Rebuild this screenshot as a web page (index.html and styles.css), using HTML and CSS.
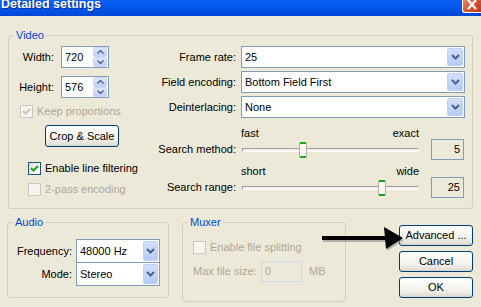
FILE: index.html
```html
<!DOCTYPE html>
<html lang="en">
<head>
<meta charset="utf-8">
<title>Detailed settings</title>
<link rel="stylesheet" href="styles.css">
</head>
<body>
<div class="titlebar">
  <span class="title">Detailed settings</span>
  <span class="close"><svg width="12" height="10" viewBox="0 0 12 10"><path d="M2 0 L10 9 M10 0 L2 9" stroke="#fff" stroke-width="2.2" fill="none"/></svg></span>
</div>
<main class="dialog">
  <fieldset class="group video">
    <legend>Video</legend>
    <div class="video-cols">
      <div class="vleft">
        <div class="spin-row">
          <span class="lbl">Width:</span>
          <div class="spin"><span class="spin-val">720</span><span class="spin-btns"><span class="spin-btn"><svg width="7" height="4" viewBox="0 0 7 4"><path d="M0.5 3.5 L3.5 0.5 L6.5 3.5" stroke="#4D6185" stroke-width="1.4" fill="none"/></svg></span><span class="spin-btn"><svg width="7" height="4" viewBox="0 0 7 4"><path d="M0.5 0.5 L3.5 3.5 L6.5 0.5" stroke="#4D6185" stroke-width="1.4" fill="none"/></svg></span></span></div>
        </div>
        <div class="spin-row second">
          <span class="lbl">Height:</span>
          <div class="spin"><span class="spin-val">576</span><span class="spin-btns"><span class="spin-btn"><svg width="7" height="4" viewBox="0 0 7 4"><path d="M0.5 3.5 L3.5 0.5 L6.5 3.5" stroke="#4D6185" stroke-width="1.4" fill="none"/></svg></span><span class="spin-btn"><svg width="7" height="4" viewBox="0 0 7 4"><path d="M0.5 0.5 L3.5 3.5 L6.5 0.5" stroke="#4D6185" stroke-width="1.4" fill="none"/></svg></span></span></div>
        </div>
        <label class="check disabled keep"><span class="box"><svg width="11" height="11" viewBox="0 0 11 11"><path d="M2 5 L4.5 7.5 L9 3" stroke="#CAC8BB" stroke-width="2" fill="none"/></svg></span>Keep proportions</label>
        <button class="btn crop" type="button">Crop &amp; Scale</button>
        <label class="check line"><span class="box"><svg width="11" height="11" viewBox="0 0 11 11"><path d="M2 5 L4.5 7.5 L9 3" stroke="#21A121" stroke-width="2" fill="none"/></svg></span>Enable line filtering</label>
        <label class="check disabled pass"><span class="box"></span>2-pass encoding</label>
      </div>
      <div class="vright">
        <span class="lbl">Frame rate:</span>
        <div class="combo"><span class="combo-val">25</span><span class="combo-btn"><svg width="9" height="6" viewBox="0 0 9 6"><path d="M1 1 L4.5 4.5 L8 1" stroke="#4D6185" stroke-width="2" fill="none"/></svg></span></div>
        <span class="lbl">Field encoding:</span>
        <div class="combo"><span class="combo-val">Bottom Field First</span><span class="combo-btn"><svg width="9" height="6" viewBox="0 0 9 6"><path d="M1 1 L4.5 4.5 L8 1" stroke="#4D6185" stroke-width="2" fill="none"/></svg></span></div>
        <span class="lbl">Deinterlacing:</span>
        <div class="combo"><span class="combo-val">None</span><span class="combo-btn"><svg width="9" height="6" viewBox="0 0 9 6"><path d="M1 1 L4.5 4.5 L8 1" stroke="#4D6185" stroke-width="2" fill="none"/></svg></span></div>

        <span class="lbl slider-lbl first">Search method:</span>
        <div class="slider-block first">
          <div class="slider-ends"><span>fast</span><span>exact</span></div>
          <div class="track-wrap"><span class="track"></span><span class="thumb" style="left:58px"></span></div>
          <div class="value-box">5</div>
        </div>
        <span class="lbl slider-lbl">Search range:</span>
        <div class="slider-block">
          <div class="slider-ends"><span>short</span><span>wide</span></div>
          <div class="track-wrap"><span class="track"></span><span class="thumb" style="left:137px"></span></div>
          <div class="value-box">25</div>
        </div>
      </div>
    </div>
  </fieldset>

  <div class="bottom">
    <fieldset class="group audio">
      <legend>Audio</legend>
      <div class="audio-grid">
        <span class="lbl">Frequency:</span>
        <div class="combo small"><span class="combo-val">48000 Hz</span><span class="combo-btn"><svg width="9" height="6" viewBox="0 0 9 6"><path d="M1 1 L4.5 4.5 L8 1" stroke="#4D6185" stroke-width="2" fill="none"/></svg></span></div>
        <span class="lbl">Mode:</span>
        <div class="combo small mode"><span class="combo-val">Stereo</span><span class="combo-btn"><svg width="9" height="6" viewBox="0 0 9 6"><path d="M1 1 L4.5 4.5 L8 1" stroke="#4D6185" stroke-width="2" fill="none"/></svg></span></div>
      </div>
    </fieldset>
    <fieldset class="group muxer">
      <legend>Muxer</legend>
      <label class="check disabled split"><span class="box"></span>Enable file splitting</label>
      <div class="size-row">
        <span class="size-lbl">Max file size:</span>
        <span class="size-input">0</span>
        <span class="size-unit">MB</span>
      </div>
    </fieldset>
    <div class="buttons">
      <button class="btn action" type="button">Advanced ...</button>
      <button class="btn action" type="button">Cancel</button>
      <button class="btn action" type="button">OK</button>
    </div>
  </div>
</main>
<svg class="pointer" width="90" height="32" viewBox="318 222 90 32">
  <g fill="#8a8a8a" opacity="0.6" transform="translate(1 2)">
    <rect x="322" y="236" width="64" height="4"/>
    <polygon points="384,227 403,238 386,249"/>
  </g>
  <g fill="#000">
    <rect x="322" y="236" width="64" height="4"/>
    <polygon points="384,227 403,238 386,249"/>
  </g>
</svg>
</body>
</html>
```

FILE: styles.css
```css
* { box-sizing: border-box; }

html, body { margin: 0; padding: 0; }

body {
  width: 481px;
  height: 307px;
  overflow: hidden;
  position: relative;
  background: #ECE9D8;
  font-family: "Liberation Sans", Arial, sans-serif;
  font-size: 11px;
  line-height: 13px;
  color: #000;
}

/* title bar */
.titlebar {
  height: 16px;
  display: flex;
  justify-content: space-between;
  align-items: flex-start;
  background: linear-gradient(#0A5FF2, #0255E8 55%, #0046D6);
  overflow: hidden;
}
.title {
  color: #fff;
  font-weight: bold;
  font-size: 12.5px;
  line-height: 15px;
  margin-top: -3px;
  padding-left: 1px;
  text-shadow: 1px 1px 0 #0A2A9A;
}
.close {
  width: 19px;
  height: 13px;
  display: flex;
  justify-content: center;
  align-items: flex-start;
  background: linear-gradient(135deg, #E9876A, #D7532E 50%, #C13A16);
  border-left: 1px solid #fff;
  border-bottom: 1px solid #fff;
  border-bottom-left-radius: 3px;
}

/* dialog */
.dialog { padding: 13px 0 0 8px; }

.group {
  margin: 0;
  padding: 0;
  min-width: 0;
  border: 1px solid #D0D0BF;
  border-radius: 3px;
}
.group legend {
  font-size: 11px;
  line-height: 13px;
  color: #0046D5;
  padding: 0 2px;
  margin-left: 5px;
}

.video {
  width: 465px;
  padding: 4px 0 11px 0;
}
.video-cols { display: flex; }

.vleft {
  width: 141px;
  display: flex;
  flex-direction: column;
  align-items: flex-start;
}

.lbl { text-align: right; white-space: nowrap; }

.spin-row {
  display: grid;
  grid-template-columns: 45px 48px;
  column-gap: 7px;
  align-items: center;
  height: 22px;
}
.spin-row.second { margin-top: 8px; }

.spin {
  height: 22px;
  border: 1px solid #7F9DB9;
  background: #fff;
  display: flex;
  justify-content: space-between;
  align-items: stretch;
  padding: 0 1px 0 3px;
}
.spin-val { align-self: center; }
.spin-btns {
  display: flex;
  flex-direction: column;
  width: 14px;
}
.spin-btn {
  flex: 1;
  display: flex;
  align-items: center;
  justify-content: center;
  background: linear-gradient(#DCE6FD, #C0D0F8);
  border: 1px solid #C9D6F5;
  border-radius: 2px;
}

.check {
  display: flex;
  align-items: center;
  gap: 4px;
  height: 13px;
  white-space: nowrap;
}
.check .box {
  width: 13px;
  height: 13px;
  flex: none;
  border: 1px solid #1C5180;
  background: linear-gradient(135deg, #DCDCD7, #FAFAF8 70%, #FFFFFF);
  display: flex;
  align-items: center;
  justify-content: center;
}
.check.disabled { color: #ACA899; }
.check.disabled .box { border-color: #CAC8BB; background: #F6F5F0; }

.keep { margin: 7px 0 0 11px; }
.line { margin: 15px 0 0 19px; }
.pass { margin: 8px 0 0 19px; }

.btn {
  font-family: inherit;
  font-size: 11px;
  line-height: 13px;
  color: #000;
  padding: 0;
  margin: 0;
  white-space: nowrap;
  border: 1px solid #003C74;
  border-radius: 3px;
  background: linear-gradient(#FFFFFF, #F4F3EE 60%, #E3E1D8 90%, #D6D0C5);
}
.crop {
  width: 74px;
  height: 22px;
  margin: 7px 0 0 36px;
}

/* right column */
.vright {
  display: grid;
  grid-template-columns: 86px 224px;
  column-gap: 5px;
  row-gap: 3px;
  align-items: center;
  align-content: start;
}

.combo {
  height: 22px;
  border: 1px solid #7F9DB9;
  background: #fff;
  display: flex;
  align-items: stretch;
  justify-content: space-between;
  padding: 1px;
}
.combo-val { align-self: center; padding-left: 2px; white-space: nowrap; }
.combo-btn {
  width: 16px;
  flex: none;
  display: flex;
  align-items: center;
  justify-content: center;
  background: linear-gradient(#D1DEFC, #B7CAF6);
  border: 1px solid #BFD0F5;
  border-radius: 2px;
}

.slider-lbl { align-self: end; padding-bottom: 3px; }
.slider-block {
  display: grid;
  grid-template-columns: 178px 33px;
  grid-template-rows: 13px 19px;
  column-gap: 12px;
  margin-top: 3px;
}
.slider-block.first, .slider-lbl.first { margin-top: 6px; }
.slider-ends {
  grid-column: 1;
  grid-row: 1;
  display: flex;
  justify-content: space-between;
}
.track-wrap {
  grid-column: 1;
  grid-row: 2;
  position: relative;
  display: flex;
  align-items: center;
  padding-left: 1px;
}
.track {
  flex: 1;
  height: 4px;
  border: 1px solid;
  border-color: #9D9C99 #FFFFFF #FFFFFF #9D9C99;
  background: #F3F2EC;
  border-radius: 1px;
}
.thumb {
  position: absolute;
  top: 2px;
  width: 8px;
  height: 16px;
  background: #F7F7F4;
  border: 1px solid #B5B2A5;
  border-top: 2px solid #21A121;
  border-bottom: 2px solid #21A121;
  border-radius: 2px;
}
.value-box {
  grid-column: 2;
  grid-row: 2;
  align-self: center;
  height: 21px;
  border: 1px solid #7F9DB9;
  background: #ECE9D8;
  padding-right: 3px;
  display: flex;
  align-items: center;
  justify-content: flex-end;
}

/* bottom area */
.bottom {
  display: flex;
  align-items: flex-start;
  margin-left: -1px;
}
.audio {
  width: 162px;
  margin-top: 7px;
  padding: 10px 0 11px 0;
}
.audio-grid {
  display: grid;
  grid-template-columns: 64px 84px;
  column-gap: 4px;
  align-items: center;
}
.combo.small { height: 24px; }
.combo.small .combo-btn { width: 15px; }
.combo.mode { margin-top: -1px; }

.muxer {
  width: 164px;
  margin: 7px 0 0 13px;
  height: 86px;
  padding: 12px 0 0 10px;
}
.muxer legend { margin-left: -5px; }
.split { margin: 0; }
.size-row {
  display: flex;
  align-items: center;
  margin-top: 7px;
  color: #ACA899;
}
.size-lbl { width: 68px; white-space: nowrap; }
.size-input {
  width: 41px;
  height: 21px;
  border: 1px solid #C9D7F1;
  background: #ECE9D8;
  display: flex;
  align-items: center;
  padding-left: 3px;
}
.size-unit { margin-left: 7px; }

.buttons {
  display: flex;
  flex-direction: column;
  gap: 5px;
  margin: 16px 0 0 53px;
}
.action { width: 74px; height: 21px; }

.pointer {
  position: absolute;
  left: 318px;
  top: 222px;
}
```
